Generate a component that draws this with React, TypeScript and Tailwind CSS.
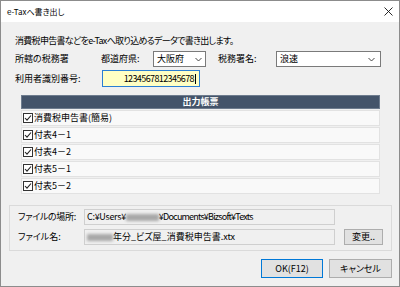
import React from "react";

const Check = () => (
  <svg width="10" height="10" viewBox="0 0 10 10" className="shrink-0">
    <rect x="0.5" y="0.5" width="9" height="9" fill="#ffffff" stroke="#333333" />
    <polyline points="2,5 4,7.2 8,2.5" fill="none" stroke="#222222" strokeWidth="1.1" />
  </svg>
);

const Chevron = () => (
  <svg width="7" height="5" viewBox="0 0 7 5" className="shrink-0">
    <polyline points="0.5,1 3.5,4 6.5,1" fill="none" stroke="#333333" strokeWidth="0.9" />
  </svg>
);

const Blur = ({ w }: { w: number }) => (
  <span className="inline-block h-[7px] bg-[#a8a8a8] blur-[1.5px] rounded-[1px]" style={{ width: w }} />
);

export default function App() {
  const rows = ["消費税申告書(簡易)", "付表4－1", "付表4－2", "付表5－1", "付表5－2"];
  return (
    <div
      className="w-[400px] h-[287px] border border-[#8c8c8c] bg-[#f0f0f0] flex flex-col overflow-hidden text-black text-[9px] leading-[10px] [font-feature-settings:'palt']"
      style={{ fontFamily: '"Noto Sans CJK JP", "Noto Sans", sans-serif' }}
    >
      {/* title bar */}
      <div className="h-[21px] bg-white flex items-center justify-between pl-[6px] pr-[6px] shrink-0">
        <span className="text-[8px]">e-Taxへ書き出し</span>
        <svg width="9" height="9" viewBox="0 0 9 9">
          <line x1="0.5" y1="0.5" x2="8.5" y2="8.5" stroke="#111" strokeWidth="0.9" />
          <line x1="8.5" y1="0.5" x2="0.5" y2="8.5" stroke="#111" strokeWidth="0.9" />
        </svg>
      </div>

      <div className="flex flex-col">
        <p className="mt-[14px] ml-[14px] h-[10px] tracking-[-0.7px]">消費税申告書などをe-Taxへ取り込めるデータで書き出します。</p>

        {/* row 2 */}
        <div className="mt-[5px] ml-[14px] h-[16px] flex items-center">
          <span className="w-[86px]">所轄の税務署</span>
          <span className="w-[52px]">都道府県:</span>
          <div className="w-[53px] h-[16px] bg-white border border-[#7a7a7a] flex items-center justify-between pl-[3px] pr-[3px]">
            <span>大阪府</span>
            <Chevron />
          </div>
          <span className="ml-[12px] w-[58px]">税務署名:</span>
          <div className="w-[105px] h-[16px] bg-white border border-[#7a7a7a] flex items-center justify-between pl-[3px] pr-[5px]">
            <span>浪速</span>
            <Chevron />
          </div>
        </div>

        {/* row 3 */}
        <div className="mt-[3px] ml-[14px] h-[17px] flex items-center">
          <span className="w-[87px]">利用者識別番号:</span>
          <div className="w-[98px] h-[17px] bg-[#ffffc4] border border-[#2a7fd4] flex items-center justify-end pr-[3px]">
            <span className="tracking-[-0.6px]">1234567812345678</span>
            <span className="ml-[1px] w-[1px] h-[10px] bg-black" />
          </div>
        </div>

        {/* table */}
        <div className="mt-[8px] ml-[20px] w-[359px] flex flex-col">
          <div className="h-[14px] bg-[#44546a] border border-[#6e7c8e] flex items-center justify-center text-white font-bold">
            出力帳票
          </div>
          {rows.map((r) => (
            <div
              key={r}
              className="mt-[1px] h-[16px] bg-[#f9f9f9] border border-[#e2e2e2] flex items-center pl-[1px] gap-[1px]"
            >
              <Check />
              <span>{r}</span>
            </div>
          ))}
        </div>

        {/* group box */}
        <div className="mt-[11px] ml-[8px] w-[383px] h-[46px] border border-[#dadada] flex flex-col pt-[3px] pl-[8px]">
          <div className="h-[16px] flex items-center">
            <span className="w-[66px] tracking-[-0.3px]">ファイルの場所:</span>
            <div className="w-[251px] h-[16px] border border-[#cfcfcf] bg-[#f0f0f0] flex items-center pl-[2px] whitespace-nowrap">
              <span className="tracking-[-0.3px]">C:¥Users¥</span>
              <Blur w={33} />
              <span className="tracking-[-0.8px]">¥Documents¥Bizsoft¥Texts</span>
            </div>
          </div>
          <div className="mt-[4px] h-[16px] flex items-center">
            <span className="w-[66px]">ファイル名:</span>
            <div className="w-[251px] h-[16px] border border-[#cfcfcf] bg-[#f0f0f0] flex items-center pl-[2px] whitespace-nowrap">
              <Blur w={26} />
              <span>年分_ビズ屋_消費税申告書.xtx</span>
            </div>
            <div className="ml-[9px] w-[39px] h-[16px] bg-[#e1e1e1] border border-[#adadad] flex items-center justify-center">
              変更..
            </div>
          </div>
        </div>

        {/* buttons */}
        <div className="mt-[8px] mr-[7px] flex justify-end gap-[6px]">
          <div className="w-[62px] h-[19px] bg-[#e1e1e1] border border-[#0078d7] flex items-center justify-center">
            OK(F12)
          </div>
          <div className="w-[63px] h-[19px] bg-[#e1e1e1] border border-[#adadad] flex items-center justify-center">
            キャンセル
          </div>
        </div>
      </div>
    </div>
  );
}
